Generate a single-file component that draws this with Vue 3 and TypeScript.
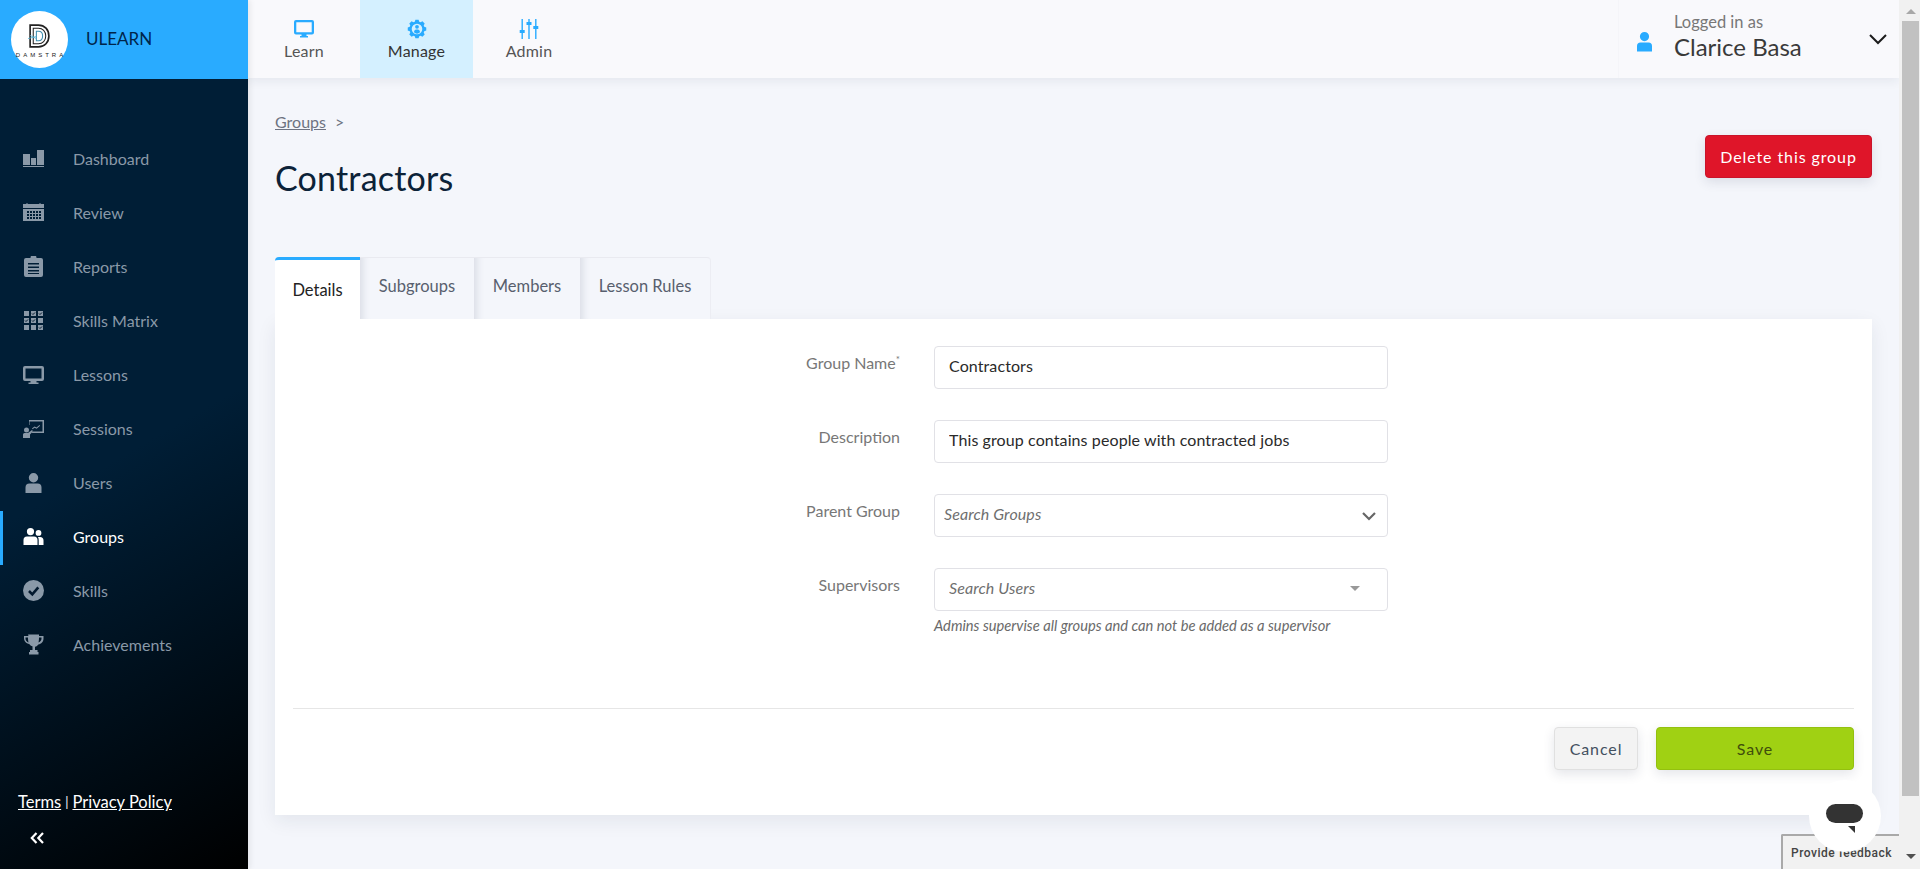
<template>
  <div class="app-shell">
    <aside class="sidebar">
      <div class="brand">
        <div class="brand-logo">
          <svg class="brand-mark" viewBox="0 0 22 24" fill="none" stroke="#222" stroke-width="1">
            <path d="M2 1h8c6 0 10 4.500 10 10.500S16 22 10 22H2z" stroke-width="1.600" />
            <path d="M5 4h5c4 0 7 3 7 7.500S14 19 10 19H5z" />
            <path d="M8 7h2c2.500 0 4 2 4 4.500S12.500 16 10 16H8z" stroke="#3f8fb0" />
            <path d="M0 14l8-2M2 11l6 3" stroke="#5ab4d6" stroke-width=".8" />
          </svg>
          <span class="brand-word">DAMSTRA</span>
        </div>
        <span class="brand-name">ULEARN</span>
      </div>

      <nav class="side-nav">
        <a v-for="item in sideItems" :key="item.label" class="side-item" :class="{ active: item.label === 'Groups' }">
          <svg class="side-icon" viewBox="0 0 21 21">
            <path :d="item.d" fill="currentColor" fill-rule="evenodd" />
            <path v-if="item.cut" :d="item.cut" fill="none" stroke="#03192e" :stroke-width="item.cutWidth ?? 1" />
          </svg>
          <span>{{ item.label }}</span>
        </a>
      </nav>

      <div class="side-foot">
        <div class="legal"><a>Terms</a><span class="pipe">|</span><a>Privacy Policy</a></div>
        <svg class="collapse" viewBox="0 0 14 12" fill="none" stroke="#fff" stroke-width="2.200">
          <path d="M6.500 1L1.800 6l4.700 5M13 1L8.300 6l4.700 5" />
        </svg>
      </div>
    </aside>

    <div class="main">
      <header class="topbar">
        <a v-for="tab in topTabs" :key="tab.label" class="top-tab" :class="{ active: tab.label === 'Manage' }">
          <svg class="top-icon" viewBox="0 0 20 20">
            <path :d="tab.d" fill="#29abff" fill-rule="evenodd" />
          </svg>
          <span>{{ tab.label }}</span>
        </a>
        <div class="user">
          <svg class="user-icon" viewBox="0 0 15 20">
            <path d="M7.500 0a4.600 4.600 0 1 1 0 9.200 4.600 4.600 0 0 1 0-9.200zM3.500 10.500h8A3.500 3.500 0 0 1 15 14v5.500H0V14a3.500 3.500 0 0 1 3.500-3.500z" fill="#29abff" />
          </svg>
          <div class="user-text">
            <span class="user-hint">Logged in as</span>
            <span class="user-name">Clarice Basa</span>
          </div>
          <svg class="user-caret" viewBox="0 0 18 11" fill="none" stroke="#1c1c1c" stroke-width="2">
            <path d="M1 1l8 8 8-8" />
          </svg>
        </div>
      </header>

      <main class="content">
        <div class="page-head">
          <div>
            <div class="crumbs"><a>Groups</a><span>&gt;</span></div>
            <h1>Contractors</h1>
          </div>
          <button class="btn-delete">Delete this group</button>
        </div>

        <div class="tabs">
          <a v-for="tab in formTabs" :key="tab" class="tab" :class="{ active: tab === 'Details' }">{{ tab }}</a>
        </div>

        <section class="card">
          <form class="form" @submit.prevent>
            <label>Group Name<sup>*</sup></label>
            <input class="field" type="text" value="Contractors" />

            <label>Description</label>
            <input class="field" type="text" value="This group contains people with contracted jobs" />

            <label>Parent Group</label>
            <div class="select">
              <input class="field narrow" type="text" placeholder="Search Groups" />
              <svg class="select-chevron" viewBox="0 0 14 9" fill="none" stroke="#666" stroke-width="2.200">
                <path d="M1 1l6 6 6-6" />
              </svg>
            </div>

            <label>Supervisors</label>
            <div>
              <div class="select">
                <input class="field" type="text" placeholder="Search Users" />
                <i class="select-arrow"></i>
              </div>
              <p class="hint">Admins supervise all groups and can not be added as a supervisor</p>
            </div>
          </form>

          <div class="actions">
            <button class="btn-cancel">Cancel</button>
            <button class="btn-save">Save</button>
          </div>
        </section>
      </main>
    </div>

    <div class="scrollbar">
      <i class="arrow-up"></i>
      <div class="thumb"></div>
      <i class="arrow-down"></i>
    </div>

    <div class="feedback">Provide feedback</div>
    <div class="chat">
      <span class="chat-pill"></span>
      <i class="chat-tail"></i>
    </div>
  </div>
</template>

<script setup lang="ts">
interface SideItem {
  label: string
  d: string
  cut?: string
  cutWidth?: number
}

const monitor =
  'M2 2h17a2 2 0 0 1 2 2v11a2 2 0 0 1-2 2H2a2 2 0 0 1-2-2V4a2 2 0 0 1 2-2zM2.500 4.500v10h16v-10zM7.500 17h6v1.500h2V20h-10v-1.500h2z'

// small holes of the calendar
let calendarHoles = ''
for (const y of [9, 12, 15]) {
  for (const x of [4, 7, 10, 13, 16]) {
    calendarHoles += `M${x} ${y}h2v2h-2z`
  }
}

const square = (x: number, y: number) => `M${x} ${y}h5v5h-5z`
let matrix = ''
for (const y of [1, 8, 15]) {
  for (const x of [1, 8, 15]) {
    matrix += square(x, y)
  }
}
const tick = (x: number, y: number) => `M${x + 1} ${y + 2.500}l1 1 2-2`

// gear outline with 8 teeth, round the centre of the 20x20 box
const gearOutline = () => {
  const pts: string[] = []
  for (let i = 0; i < 8; i++) {
    const a = (i * Math.PI) / 4
    const steps: [number, number][] = [
      [7.600, -0.300],
      [9.400, -0.170],
      [9.400, 0.170],
      [7.600, 0.300]
    ]
    for (const [r, off] of steps) {
      pts.push(`${(10 + r * Math.cos(a + off)).toFixed(2)} ${(10 + r * Math.sin(a + off)).toFixed(2)}`)
    }
  }
  return 'M' + pts.join('L') + 'z'
}

const sideItems: SideItem[] = [
  { label: 'Dashboard', d: 'M0 6h7v11H0zM8 10h5v7H8zM14 2h7v15h-7zM0 18h21v1H0z' },
  { label: 'Review', d: 'M0 2h3.500V1h1v1h12V1h1v1H21v4H0zM0 7h21v12H0z' + calendarHoles },
  {
    label: 'Reports',
    d: 'M3 2h4.500a3 3 0 0 1 6 0H18a2 2 0 0 1 2 2v15a2 2 0 0 1-2 2H3a2 2 0 0 1-2-2V4a2 2 0 0 1 2-2zM5 7v1.500h11V7zM5 10.500V12h11v-1.500zM5 14v1.500h11V14zM5 17v1h11v-1z'
  },
  {
    label: 'Skills Matrix',
    d: matrix,
    cut: [tick(8, 1), tick(15, 1), tick(1, 8), tick(8, 8), tick(15, 15)].join('')
  },
  { label: 'Lessons', d: monitor },
  {
    label: 'Sessions',
    d: 'M6 2h15v13H9v-1.500h10.500v-10h-13V7H6zM3.500 9.500a2.500 2.500 0 1 1 0 5 2.500 2.500 0 0 1 0-5zM1.500 15H5l4-3 1 1.200L7 16.500V20H0v-3.500A1.500 1.500 0 0 1 1.500 15zM9 10.500l2.500-2 2 1 3-2.500.6.7-3.500 3-2-1-2 1.600z'
  },
  {
    label: 'Users',
    d: 'M10.500 1a4.700 4.700 0 1 1 0 9.400 4.700 4.700 0 0 1 0-9.400zM6.500 11.500h8A4 4 0 0 1 18.500 15.500V21h-16v-5.500a4 4 0 0 1 4-4z'
  },
  {
    label: 'Groups',
    d: 'M7.500 2a3.600 3.600 0 1 1 0 7.200 3.600 3.600 0 0 1 0-7.200zM15.500 4a2.900 2.900 0 1 1 0 5.800 2.900 2.900 0 0 1 0-5.800zM4 10.500h7a3.500 3.500 0 0 1 3.500 3.500v5H.500v-5A3.500 3.500 0 0 1 4 10.500zM15.800 11H17a3.500 3.500 0 0 1 3.500 3.500V19h-4.800v-5a5 5 0 0 0-.8-3z'
  },
  {
    label: 'Skills',
    d: 'M10.500 0a10.500 10.500 0 1 1 0 21 10.500 10.500 0 0 1 0-21z',
    cut: 'M6 11l3.300 3.300 6-7',
    cutWidth: 2.600
  },
  {
    label: 'Achievements',
    d: 'M5 .500h11v1.500h4.500v2.500c0 3.200-2.200 5.500-5.200 6-.8 1.200-1.800 2-3.300 2.300V16h2.500v2h1v2.500H6V18h1v-2h2.500v-3.700c-1.500-.3-2.500-1.100-3.300-2.300-3-.5-5.200-2.800-5.200-6V2h4.500zM2.500 3.500v1c0 1.800 1 3.200 3 3.900-.3-1.200-.5-3-.5-4.900zM18.500 3.500H16c0 1.900-.2 3.700-.5 4.900 2-.7 3-2.100 3-3.900z'
  }
]

const topTabs = [
  { label: 'Learn', d: 'M2 1h16a2 2 0 0 1 2 2v10.500a2 2 0 0 1-2 2H2a2 2 0 0 1-2-2V3a2 2 0 0 1 2-2zM2.300 3.300v9.900h15.400V3.300zM7.500 15.500h5V17h1.500v1.500H6V17h1.500z' },
  {
    label: 'Manage',
    d:
      gearOutline() +
      'M10 4.700a5.300 5.300 0 1 0 0 10.600 5.300 5.300 0 0 0 0-10.600zM10 5.900a1.900 1.900 0 1 1 0 3.800 1.900 1.900 0 0 1 0-3.800zM7 13.300c0-1.600 1-2.800 2.200-2.800h1.600c1.200 0 2.200 1.200 2.200 2.800a4.300 4.300 0 0 1-6 0z'
  },
  {
    label: 'Admin',
    d: 'M2.500 0h1.400v11h1.800v3H3.900v6H2.500v-6H.7v-3h1.800zM9.300 0h1.400v3h1.800v3h-1.800v14H9.300V6H7.500V3h1.800zM16.100 0h1.400v7h1.800v3h-1.800v10h-1.400V10h-1.800V7h1.800z'
  }
]

const formTabs = ['Details', 'Subgroups', 'Members', 'Lesson Rules']
</script>

<style>
html,
body {
  margin: 0;
  overflow: hidden;
}
</style>

<style scoped>
.app-shell {
  position: relative;
  display: flex;
  height: 869px;
  overflow: hidden;
  font-family: Lato, "Open Sans", sans-serif;
  color: #333;
  background: #f4f6fb;
}

.sidebar {
  width: 248px;
  flex: none;
  display: flex;
  flex-direction: column;
  background: linear-gradient(150deg, #001e36 52%, #000 100%);
  box-shadow: 2px 0 6px rgba(0, 0, 0, 0.08);
  z-index: 3;
}

.brand {
  height: 79px;
  display: flex;
  align-items: center;
  gap: 18px;
  padding-left: 11px;
  background: #29abff;
}
.brand-logo {
  width: 57px;
  height: 57px;
  border-radius: 50%;
  background: #fff;
  display: flex;
  flex-direction: column;
  align-items: center;
  justify-content: flex-end;
  padding-bottom: 9px;
  box-sizing: border-box;
}
.brand-mark {
  width: 23px;
  height: 25px;
  margin-bottom: 3px;
}
.brand-word {
  font-family: "Liberation Sans", sans-serif;
  font-size: 6px;
  line-height: 7px;
  letter-spacing: 3px;
  margin-right: -3px;
  color: #222;
  white-space: nowrap;
}
.brand-name {
  font-size: 17px;
  color: #00254a;
  padding-bottom: 2px;
}

.side-nav {
  margin-top: 54px;
}
.side-item {
  height: 54px;
  display: flex;
  align-items: center;
  gap: 29px;
  padding: 0 0 4px 23px;
  box-sizing: border-box;
  font-size: 16px;
  color: #8a99a8;
  cursor: pointer;
}
.side-item.active {
  color: #fff;
  border-left: 3px solid #29abff;
  padding-left: 20px;
}
.side-icon {
  width: 21px;
  height: 21px;
  flex: none;
}

.side-foot {
  margin-top: auto;
  padding: 0 0 25px 18px;
}
.legal {
  font-size: 16.500px;
  line-height: 20px;
  color: #fff;
  display: flex;
  align-items: center;
}
.legal a {
  text-decoration: underline;
  cursor: pointer;
}
.pipe {
  font-size: 13px;
  margin: 0 4px;
}
.collapse {
  display: block;
  width: 14px;
  height: 12px;
  margin: 20px 0 0 12px;
}

.main {
  flex: 1;
  min-width: 0;
  display: flex;
  flex-direction: column;
}

.topbar {
  height: 78px;
  flex: none;
  display: flex;
  background: #f9f9fc;
  box-shadow: 0 3px 10px rgba(30, 40, 70, 0.07);
  z-index: 2;
}
.top-tab {
  width: 112px;
  display: flex;
  flex-direction: column;
  align-items: center;
  padding-top: 19px;
  box-sizing: border-box;
  font-size: 16px;
  letter-spacing: 0.2px;
  line-height: 20px;
  color: #555;
  cursor: pointer;
}
.top-tab.active {
  width: 113px;
  background: #d4f0ff;
  color: #333;
}
.top-icon {
  width: 20px;
  height: 20px;
  margin-bottom: 2px;
}

.user {
  margin-left: auto;
  width: 281px;
  box-sizing: border-box;
  display: flex;
  align-items: center;
  padding: 0 12px 0 18px;
  border-left: 1px solid #f5f5f9;
}
.user-icon {
  width: 15px;
  height: 20px;
  flex: none;
  margin-top: 5px;
}
.user-text {
  display: flex;
  flex-direction: column;
  margin: -4px 0 0 22px;
}
.user-hint {
  font-size: 16.500px;
  line-height: 20px;
  color: #777;
}
.user-name {
  font-size: 24px;
  line-height: 30px;
  color: #3a3a3a;
}
.user-caret {
  width: 18px;
  height: 11px;
  margin-left: auto;
}

.content {
  flex: 1;
  padding: 0 27px;
}

.page-head {
  height: 179px;
  display: flex;
  justify-content: space-between;
  align-items: flex-start;
}
.crumbs {
  display: flex;
  gap: 9px;
  margin-top: 34px;
  font-size: 16px;
  line-height: 20px;
  color: #6d7382;
}
.crumbs a {
  text-decoration: underline;
  cursor: pointer;
}
h1 {
  margin: 26px 0 0;
  font-size: 34px;
  line-height: 40px;
  font-weight: 400;
  letter-spacing: 0.2px;
  color: #0c2238;
}
.btn-delete {
  margin-top: 57px;
  width: 167px;
  height: 43px;
  border: 1px solid #c9142a;
  border-radius: 4px;
  background: #df1529;
  color: #fff;
  font: 16px Lato, sans-serif;
  letter-spacing: 0.9px;
  box-shadow: 0 4px 12px rgba(30, 40, 70, 0.12);
}

.tabs {
  display: flex;
  height: 62px;
}
.tab {
  height: 62px;
  box-sizing: border-box;
  padding: 0 0 6px;
  display: flex;
  align-items: center;
  justify-content: center;
  font-size: 16.500px;
  color: #585f6e;
  background: #f4f6fb;
  border-top: 1px solid #e9eaf0;
  box-shadow: inset 10px 0 8px -8px rgba(30, 40, 70, 0.14);
  cursor: pointer;
}
.tab:nth-child(1) { width: 85px; }
.tab:nth-child(2) { width: 114px; }
.tab:nth-child(3) { width: 106px; }
.tab:nth-child(4) {
  width: 131px;
  border-right: 1px solid #eceDF3;
  border-top-right-radius: 4px;
}
.tab.active {
  background: #fff;
  color: #222;
  padding: 0;
  border-top: 3px solid #29abff;
  border-top-left-radius: 4px;
  box-shadow: none;
}

.card {
  height: 496px;
  box-sizing: border-box;
  padding: 27px 18px 0;
  background: #fff;
  box-shadow: 0 6px 18px rgba(30, 40, 70, 0.08);
}

.form {
  display: grid;
  grid-template-columns: 607px 454px;
  column-gap: 34px;
  row-gap: 31px;
  height: 362px;
  align-content: start;
  border-bottom: 1px solid #e6e6e6;
}
.form label {
  text-align: right;
  font-size: 16px;
  line-height: 34px;
  color: #777;
}
.form sup {
  font-size: 10px;
  line-height: 0;
}
.field {
  display: block;
  width: 100%;
  height: 43px;
  box-sizing: border-box;
  padding: 0 14px 4px;
  border: 1px solid #e1e1e6;
  border-radius: 4px;
  background: #fff;
  font: 16px Lato, sans-serif;
  letter-spacing: 0.1px;
  color: #2a2a2a;
  outline: none;
}
.field.narrow {
  padding-left: 9px;
}
.field::placeholder {
  font-style: italic;
  color: #6f6f6f;
  opacity: 1;
}
.select {
  position: relative;
}
.select-chevron {
  position: absolute;
  right: 12px;
  top: 18px;
  width: 14px;
  height: 9px;
}
.select-arrow {
  position: absolute;
  right: 28px;
  top: 18px;
  border: 5px solid transparent;
  border-top: 5px solid #999;
  border-bottom: 0;
}
.hint {
  margin: 5px 0 0;
  font-size: 14.700px;
  line-height: 18px;
  font-style: italic;
  color: #6a6a6a;
}

.actions {
  display: flex;
  justify-content: flex-end;
  gap: 18px;
  margin-top: 18px;
}
.actions button {
  height: 43px;
  padding: 0 0 1px;
  border-radius: 4px;
  font: 16px Lato, sans-serif;
  letter-spacing: 0.9px;
  box-shadow: 0 4px 12px rgba(30, 40, 70, 0.12);
}
.btn-cancel {
  width: 84px;
  background: #f3f3f3;
  border: 1px solid #e0e0e0;
  color: #43505f;
}
.btn-save {
  width: 198px;
  background: #a0d113;
  border: 1px solid #93c00f;
  color: #3f4e0c;
}

.scrollbar {
  width: 21px;
  flex: none;
  display: flex;
  flex-direction: column;
  align-items: center;
  background: #f1f1f1;
  padding-left: 2px;
  box-sizing: border-box;
  z-index: 2;
}
.arrow-up {
  margin-top: 9px;
  border: 5px solid transparent;
  border-bottom: 5px solid #a8a8a8;
  border-top: 0;
}
.thumb {
  width: 17px;
  height: 775px;
  margin-top: 7px;
  background: #c1c1c1;
}
.arrow-down {
  margin-top: 58px;
  border: 5px solid transparent;
  border-top: 5px solid #505050;
  border-bottom: 0;
}

.feedback {
  position: absolute;
  left: 1781px;
  top: 834px;
  width: 118px;
  height: 35px;
  box-sizing: border-box;
  padding: 10px 0 0 8px;
  border-left: 2px solid #a9a9a9;
  border-top: 2px solid #a9a9a9;
  border-top-left-radius: 2px;
  background: #f1f1f1;
  font-family: Roboto, "Liberation Sans", sans-serif;
  font-size: 12px;
  font-weight: 500;
  line-height: 15px;
  letter-spacing: 0.5px;
  color: #444;
  white-space: nowrap;
  z-index: 4;
}
.chat {
  position: absolute;
  left: 1809px;
  top: 780px;
  width: 72px;
  height: 72px;
  border-radius: 50%;
  background: #fff;
  z-index: 5;
}
.chat-pill {
  position: absolute;
  left: 17px;
  top: 24px;
  width: 37px;
  height: 19px;
  border-radius: 10px;
  background: #333;
}
.chat-tail {
  position: absolute;
  left: 39px;
  top: 46px;
  border-top: 7px solid #333;
  border-left: 7px solid transparent;
}
</style>
